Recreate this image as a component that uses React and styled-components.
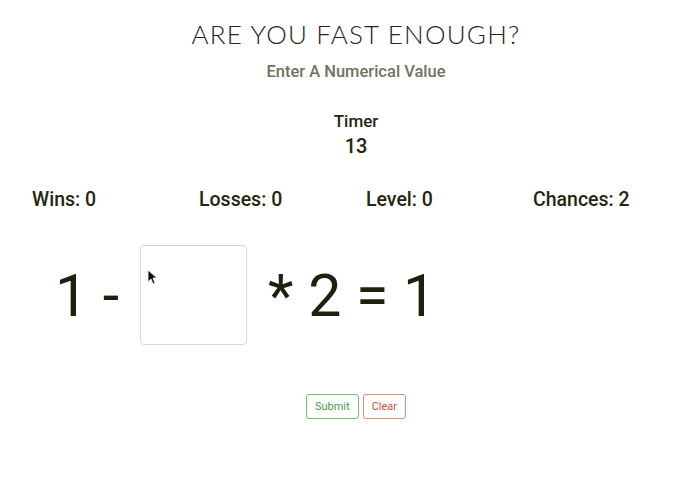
import React, { useState } from "react";
import styled, { createGlobalStyle } from "styled-components";

const GlobalStyle = createGlobalStyle`
  html, body {
    margin: 0;
    padding: 0;
    background: #fff;
  }
  body {
    font-family: Roboto, "Liberation Sans", sans-serif;
    color: #26260f;
  }
`;

const Page = styled.div`
  width: 700px;
  height: 500px;
  box-sizing: border-box;
  padding-left: 12px;
  display: flex;
  flex-direction: column;
  align-items: center;
`;

const Title = styled.h1`
  margin: 19px 0 0;
  font: 300 26px Lato, "Open Sans", sans-serif;
  letter-spacing: 1.2px;
  color: #26261a;
  line-height: 30px;
`;

const Subtitle = styled.div`
  margin-top: 13px;
  font: 500 16.5px Roboto, sans-serif;
  color: #70735e;
`;

const Timer = styled.div`
  margin-top: 30px;
  display: flex;
  flex-direction: column;
  align-items: center;
  gap: 3px;
`;

const TimerLabel = styled.div`
  font: 500 17px Roboto, sans-serif;
`;

const TimerValue = styled.div`
  font: 500 20px Roboto, sans-serif;
`;

const Stats = styled.div`
  align-self: stretch;
  margin: 30px 0 0 -12px;
  padding-left: 32px;
  display: grid;
  grid-template-columns: repeat(4, 167px);
`;

const Stat = styled.div`
  font: 500 19.5px Roboto, sans-serif;
`;

const Equation = styled.div`
  align-self: stretch;
  margin: 34px 0 0 -12px;
  padding-left: 55px;
  display: flex;
  align-items: center;
  font: 400 59px Roboto, sans-serif;
  color: #1f1f0c;
`;

const Term = styled.span`
  white-space: pre;
`;

const AnswerWrap = styled.div`
  position: relative;
  margin: 0 21px;
`;

const Answer = styled.input`
  box-sizing: border-box;
  width: 107px;
  height: 100px;
  border: 1px solid #d8d8cc;
  border-radius: 4px;
  background: transparent;
  font: 400 59px Roboto, sans-serif;
  text-align: center;
  outline: none;
`;

const Pointer = styled.svg`
  position: absolute;
  left: 7px;
  top: 24px;
  pointer-events: none;
`;

const Actions = styled.div`
  margin-top: 49px;
  display: flex;
  gap: 4px;
`;

const Btn = styled.button`
  height: 25px;
  padding: 0 8px;
  background: #fff;
  border: 1px solid ${(p) => p.$color};
  border-radius: 3px;
  color: ${(p) => p.$text};
  font: 400 11px Roboto, sans-serif;
  cursor: pointer;
`;

export default function App() {
  const [value, setValue] = useState("");
  return (
    <Page>
      <GlobalStyle />
      <Title>ARE YOU FAST ENOUGH?</Title>
      <Subtitle>Enter A Numerical Value</Subtitle>
      <Timer>
        <TimerLabel>Timer</TimerLabel>
        <TimerValue>13</TimerValue>
      </Timer>
      <Stats>
        <Stat>Wins: 0</Stat>
        <Stat>Losses: 0</Stat>
        <Stat>Level: 0</Stat>
        <Stat>Chances: 2</Stat>
      </Stats>
      <Equation>
        <Term>1 -</Term>
        <AnswerWrap>
          <Answer value={value} onChange={(e) => setValue(e.target.value)} />
          <Pointer width="10" height="16" viewBox="0 0 10 16">
            <path d="M1 1 L1 13 L4 10 L6 15 L8 14 L6 9 L10 9 Z" fill="#111" stroke="#fff" strokeWidth="0.8" />
          </Pointer>
        </AnswerWrap>
        <Term>* 2 = 1</Term>
      </Equation>
      <Actions>
        <Btn $color="#6cc46c" $text="#3f9f3f">Submit</Btn>
        <Btn $color="#e58a80" $text="#d24a3a">Clear</Btn>
      </Actions>
    </Page>
  );
}
